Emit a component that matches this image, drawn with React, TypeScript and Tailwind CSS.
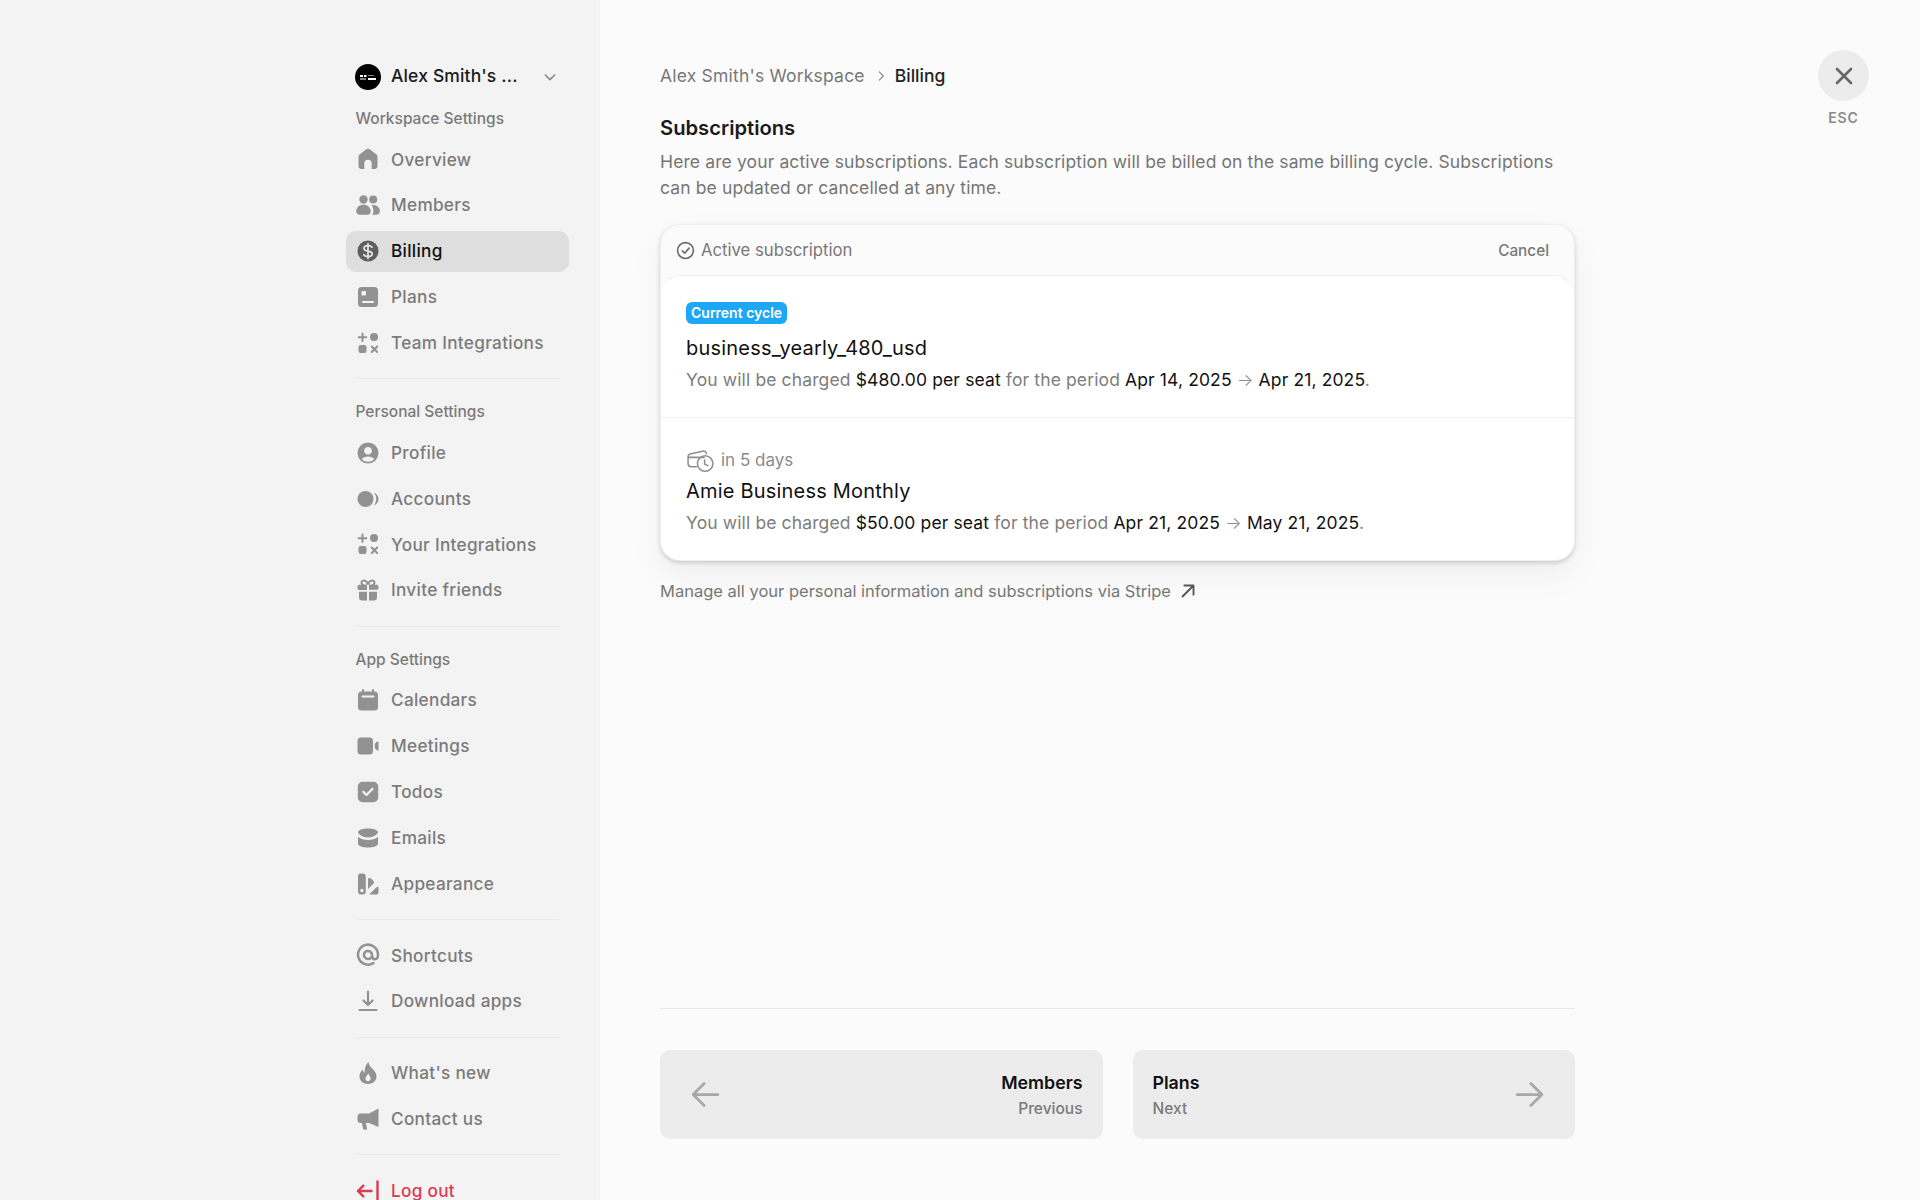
import React, { FC, ReactNode } from "react";

const Svg: FC<{ children: ReactNode }> = ({ children }) => (
  <svg viewBox="0 0 24 24" fill="currentColor" className="w-[24px] h-[24px]">
    {children}
  </svg>
);

const HomeIcon = () => (
  <Svg>
    <path d="M12 1.8c-.7 0-1.4.3-2 .7L3.9 7.2C3 7.9 2.5 9 2.5 10.1V19c0 1.7 1.3 3 3 3H8.3v-5.5a3.7 3.7 0 0 1 7.4 0V22h2.8c1.7 0 3-1.3 3-3v-8.9c0-1.1-.5-2.2-1.4-2.9L14 2.5c-.6-.4-1.3-.7-2-.7z" />
  </Svg>
);
const MembersIcon = () => (
  <Svg>
    <circle cx="7.5" cy="6.5" r="4.2" />
    <circle cx="17.2" cy="6.5" r="4" />
    <path d="M0.3 18.5c0-4 3-6.7 7.2-6.7s7.2 2.7 7.2 6.7c0 2-1.5 3.2-3 3.2h-8.4c-1.5 0-3-1.2-3-3.2z" />
    <path d="M15.5 12c4.7-.6 8.4 1.8 8.4 6.1 0 2-1.3 3.6-3 3.6h-4.8c.8-.9 1.3-2 1.3-3.3 0-2.5-.7-4.8-1.9-6.4z" />
  </Svg>
);
const BillingIcon = () => (
  <Svg>
    <circle cx="12" cy="12" r="10.5" />
    <path d="M16 8.2c-.7-1-2-1.6-4-1.6-2.4 0-4 1.1-4 2.8 0 3.9 8.2 1.5 8.2 5.3 0 1.7-1.7 2.8-4.2 2.8-2 0-3.5-.7-4.2-1.8M12 4.5v15" fill="none" stroke="#e4e4e4" strokeWidth="1.7" strokeLinecap="round" />
  </Svg>
);
const PlansIcon = () => (
  <Svg>
    <path fillRule="evenodd" d="M5.5 2h13A3.5 3.5 0 0 1 22 5.5v13a3.5 3.5 0 0 1-3.5 3.5h-13A3.5 3.5 0 0 1 2 18.5v-13A3.5 3.5 0 0 1 5.5 2zM6.5 6a1 1 0 0 0-1 1v2.5a1 1 0 0 0 1 1H9a1 1 0 0 0 1-1V7a1 1 0 0 0-1-1zM7 16a1 1 0 1 0 0 2h10a1 1 0 1 0 0-2z" />
  </Svg>
);
const IntegrationsIcon = () => (
  <Svg>
    <path d="M6.5 2.5v7.5M2.7 6.25h7.6M15.7 15.5l5.5 5.500M21.2 15.5l-5.500 5.500" fill="none" stroke="currentColor" strokeWidth="2" strokeLinecap="round" />
    <circle cx="18" cy="6" r="4" />
    <rect x="2.5" y="14" width="8" height="8" rx="2.2" />
  </Svg>
);
const ProfileIcon = () => (
  <Svg>
    <path fillRule="evenodd" d="M12 1.5a10.5 10.5 0 1 1 0 21 10.5 10.5 0 0 1 0-21zM12 6a3.8 3.8 0 1 0 0 7.6A3.8 3.8 0 0 0 12 6zM12 15.5c-2.7 0-5 1-6.2 2.7a8.4 8.4 0 0 0 12.4 0c-1.2-1.7-3.5-2.7-6.2-2.7z" />
  </Svg>
);
const AccountsIcon = () => (
  <Svg>
    <circle cx="9.5" cy="12" r="8" />
    <path d="M17.8 5.5c2.6 1 4.7 3.5 4.7 6.5s-2.1 5.5-4.7 6.5c1.5-1.8 2.4-4 2.4-6.5s-.9-4.7-2.4-6.5z" />
  </Svg>
);
const GiftIcon = () => (
  <Svg>
    <path fillRule="evenodd" d="M7.8 1.5c1.8 0 3.3 1 4.2 2.5.9-1.5 2.4-2.5 4.2-2.5 2 0 3.3 1.4 3.3 3 0 .9-.3 1.7-.8 2.3h2c1 0 1.8.8 1.8 1.8v1.7c0 .8-.7 1.4-1.5 1.4H13V6.8h-2v5.200H3c-.8 0-1.5-.6-1.5-1.4V8.600c0-1 .8-1.800 1.800-1.800h2c-.5-.6-.8-1.400-.8-2.300 0-1.600 1.300-3 3.300-3zM7.800 3.500c-.8 0-1.300.5-1.300 1.100 0 1.200 1.200 2.200 3.500 2.200h.5c0-1.700-1.100-3.300-2.700-3.300zM16.200 3.500c-1.600 0-2.700 1.600-2.700 3.300h.5c2.300 0 3.500-1 3.500-2.200 0-.6-.5-1.100-1.300-1.100z" />
    <path d="M3 13.800h8V22.500H6a3 3 0 0 1-3-3zM13 13.800h8v5.700a3 3 0 0 1-3 3h-5z" />
  </Svg>
);
const CalendarIcon = () => (
  <Svg>
    <path fillRule="evenodd" d="M7 1a1 1 0 0 1 1 1v1.500h8V2a1 1 0 1 1 2 0v1.500h.5A3.500 3.500 0 0 1 22 7v12a3.500 3.500 0 0 1-3.500 3.500h-13A3.500 3.500 0 0 1 2 19V7a3.500 3.500 0 0 1 3.500-3.500H6V2a1 1 0 0 1 1-1zM6.500 7.500a1 1 0 0 0 0 2h11a1 1 0 1 0 0-2z" />
  </Svg>
);
const MeetingsIcon = () => (
  <Svg>
    <rect x="1.5" y="3.5" width="15.5" height="17" rx="3.5" />
    <path d="M18.8 9.800l2.400-2.200c.5-.5 1.300-.1 1.300.7v7.400c0 .8-.8 1.200-1.300.7l-2.400-2.200z" />
  </Svg>
);
const TodosIcon = () => (
  <Svg>
    <path fillRule="evenodd" d="M6.500 1.800h11a4.700 4.700 0 0 1 4.700 4.700v11a4.700 4.700 0 0 1-4.700 4.700h-11a4.700 4.700 0 0 1-4.700-4.700v-11a4.700 4.700 0 0 1 4.700-4.700zM17.400 9.500a1.100 1.100 0 0 0-1.600-1.500l-5.300 5.400-2.300-2.300a1.100 1.100 0 0 0-1.600 1.600l3.100 3.100c.4.400 1.100.4 1.600 0z" />
  </Svg>
);
const EmailsIcon = () => (
  <Svg>
    <path d="M12 2.500c5.500 0 10 1.600 10 3.800 0 1.900-4.500 5.200-10 5.200S2 8.200 2 6.300c0-2.200 4.500-3.800 10-3.800z" />
    <path d="M2 10.700c2.300 2.100 6 3.300 10 3.300s7.700-1.200 10-3.300v7c0 2.100-4.500 3.800-10 3.800S2 19.800 2 17.700z" />
  </Svg>
);
const AppearanceIcon = () => (
  <Svg>
    <path fillRule="evenodd" d="M4.500 1.500h2.300c1.700 0 3 1.300 3 3v15c0 1.700-1.300 3-3 3H5c-1.700 0-3-1.300-3-3V4c0-1.400 1.100-2.500 2.500-2.500zM5.900 16.800a1.700 1.700 0 1 0 0 3.400 1.700 1.700 0 0 0 0-3.400z" />
    <path d="M12 6.500c1-.8 2.500-.7 3.300.3l2.500 2.800c.4.500.4 1.100 0 1.600L12 17zM22.500 15.200v5.300c0 1.100-.9 2-2 2h-7.300l7-7.100c.7-.7 2.300-.8 2.300-.2z" />
  </Svg>
);
const ShortcutsIcon = () => (
  <Svg>
    <path d="M17.500 20A10 10 0 1 1 22 12c0 2.500-1.300 4.200-3.200 4.200S16 14.500 16 12.500V12a4 4 0 1 0-1.200 2.800" fill="none" stroke="currentColor" strokeWidth="2.5" strokeLinecap="round" />
  </Svg>
);
const DownloadIcon = () => (
  <Svg>
    <path d="M12 2.500v13M7.500 11.500l4.500 4.500 4.500-4.500M3.500 21h17" fill="none" stroke="currentColor" strokeWidth="2.2" strokeLinecap="round" strokeLinejoin="round" />
  </Svg>
);
const FlameIcon = () => (
  <Svg>
    <path fillRule="evenodd" d="M12.500 1c.5 3.200 2 4.800 3.700 6.600C18.300 9.800 20.500 12 20.500 15.500c0 4.400-3.800 7.500-8.500 7.500S3.500 19.900 3.500 15.500c0-3 1.400-5.300 3.300-7 .2 1.600.7 2.700 1.800 3.500C8.500 7.500 9.700 3.400 12.500 1zM12.300 12.200c-.4 1.800-2.800 2.800-2.800 5.300 0 1.700 1.100 2.800 2.500 2.800s2.600-1.100 2.600-2.800c0-2.300-1.700-3.300-2.300-5.300z" />
  </Svg>
);
const MegaphoneIcon = () => (
  <Svg>
    <path d="M22.500 1.500v18.500L13 16H9.800l1.200 5c.2.900-.4 1.700-1.300 1.700H8.500c-.7 0-1.200-.4-1.400-1L5.800 16H4.500c-1.700 0-3-1.300-3-3V9.500c0-1.700 1.300-3 3-3H13z" />
  </Svg>
);
const LogoutIcon = () => (
  <Svg>
    <path d="M15.500 12H2M7.300 6.700L2 12l5.300 5.300M21.500 2.500v19" fill="none" stroke="currentColor" strokeWidth="2.4" strokeLinecap="round" strokeLinejoin="round" />
  </Svg>
);

const NavItem: FC<{ icon: ReactNode; label: string; active?: boolean }> = ({ icon, label, active }) => (
  <div
    className={`h-[40.86px] flex items-center gap-[11px] pl-[10px] rounded-[10px] text-[17.2px] tracking-[0.3px] font-medium ${
      active ? "bg-[#dedede] text-[#111111]" : "text-[#7b7b7b]"
    }`}
  >
    <span className={`flex items-center justify-center w-[24px] h-[24px] ${active ? "text-[#5f5f5f]" : "text-[#929292]"}`}>{icon}</span>
    {label}
  </div>
);

const Label: FC<{ children: ReactNode }> = ({ children }) => (
  <div className="h-[20px] leading-[20px] pl-[9.5px] mb-[10px] text-[15.5px] font-medium text-[#7a7a7a]">{children}</div>
);

const Divider = () => <div className="h-px w-[203px] ml-[10px] mt-[15px] mb-[15px] bg-[#e9e9e9]" />;

const Group: FC<{ children: ReactNode }> = ({ children }) => <div className="flex flex-col gap-[5px]">{children}</div>;

const Sidebar = () => (
  <aside className="w-[600px] h-[1200px] shrink-0 overflow-hidden bg-[#f3f3f3] border-r border-[#f0f0f0] pl-[346px] pr-[30px] pt-[56px]">
    <div className="h-[41px] flex items-center pl-[9px] pr-[11px]">
      <svg viewBox="0 0 26 26" className="w-[26px] h-[26px] shrink-0">
        <circle cx="13" cy="13" r="13" fill="#000000" />
        <rect x="5" y="11" width="3" height="2" fill="#ffffff" />
        <rect x="9" y="11" width="2.5" height="2" fill="#ffffff" />
        <rect x="5" y="14.5" width="6" height="1" fill="#ffffff" />
        <rect x="13" y="14" width="8" height="2" fill="#ffffff" />
        <rect x="13" y="11" width="6" height="1" fill="#888888" />
      </svg>
      <span className="ml-[10px] text-[17.5px] tracking-[0.15px] font-medium text-[#1a1a1a]">Alex Smith's ...</span>
      <svg viewBox="0 0 24 24" fill="none" stroke="#8a8a8a" strokeWidth="2.4" strokeLinecap="round" strokeLinejoin="round" className="ml-auto w-[16px] h-[16px]">
        <path d="M5 9l7 7 7-7" />
      </svg>
    </div>
    <div className="mt-[12px]">
      <Label>Workspace Settings</Label>
      <Group>
        <NavItem icon={<HomeIcon />} label="Overview" />
        <NavItem icon={<MembersIcon />} label="Members" />
        <NavItem icon={<BillingIcon />} label="Billing" active />
        <NavItem icon={<PlansIcon />} label="Plans" />
        <NavItem icon={<IntegrationsIcon />} label="Team Integrations" />
      </Group>
    </div>
    <Divider />
    <div className="mt-[23px]">
      <Label>Personal Settings</Label>
      <Group>
        <NavItem icon={<ProfileIcon />} label="Profile" />
        <NavItem icon={<AccountsIcon />} label="Accounts" />
        <NavItem icon={<IntegrationsIcon />} label="Your Integrations" />
        <NavItem icon={<GiftIcon />} label="Invite friends" />
      </Group>
    </div>
    <Divider />
    <div className="mt-[23px]">
      <Label>App Settings</Label>
      <Group>
        <NavItem icon={<CalendarIcon />} label="Calendars" />
        <NavItem icon={<MeetingsIcon />} label="Meetings" />
        <NavItem icon={<TodosIcon />} label="Todos" />
        <NavItem icon={<EmailsIcon />} label="Emails" />
        <NavItem icon={<AppearanceIcon />} label="Appearance" />
      </Group>
    </div>
    <Divider />
    <Group>
      <NavItem icon={<ShortcutsIcon />} label="Shortcuts" />
      <NavItem icon={<DownloadIcon />} label="Download apps" />
    </Group>
    <Divider />
    <Group>
      <NavItem icon={<FlameIcon />} label="What's new" />
      <NavItem icon={<MegaphoneIcon />} label="Contact us" />
    </Group>
    <Divider />
    <div className="h-[41px] flex items-center gap-[11px] pl-[10px] text-[17.2px] tracking-[0.3px] font-medium text-[#dc3a50]">
      <span className="w-[24px] h-[24px]">
        <LogoutIcon />
      </span>
      Log out
    </div>
  </aside>
);

const SubRow: FC<{ head: ReactNode; headClass: string; title: string; price: string; from: string; to: string; border?: boolean }> = ({
  head,
  headClass,
  title,
  price,
  from,
  to,
  border,
}) => (
  <div className={`h-[142px] pl-[25px] flex flex-col ${border ? "border-b border-[#eeeeee]" : ""}`}>
    <div className={`h-[22px] flex items-center ${headClass}`}>{head}</div>
    <div className="h-[28px] leading-[28px] text-[20px] tracking-[0.2px] text-[#111111]">{title}</div>
    <div className="mt-[6px] h-[24px] leading-[24px] text-[17.5px] tracking-[0.125px] text-[#7d7d7d]">
      You will be charged <span className="text-[#111111]">{price} per seat</span> for the period{" "}
      <span className="text-[#111111]">{from}</span> <span className="font-light text-[#8f8f8f]">→</span> <span className="text-[#111111]">{to}</span>.
    </div>
  </div>
);

const PagerCard: FC<{ title: string; sub: string; next?: boolean }> = ({ title, sub, next }) => (
  <div className={`flex-1 h-[89px] rounded-[10px] bg-[#ececec] flex items-center justify-between ${next ? "pl-[20px] pr-[29px]" : "flex-row-reverse pl-[29px] pr-[20px]"}`}>
    <div className={`pt-[2px] flex flex-col ${next ? "items-start" : "items-end"}`}>
      <span className="text-[17.8px] leading-[26px] font-semibold text-[#111111]">{title}</span>
      <span className="mt-[1px] text-[15.5px] leading-[24px] font-medium text-[#7a7a7a]">{sub}</span>
    </div>
    <svg viewBox="0 0 24 24" fill="none" stroke="#a8a8a8" strokeWidth="2" strokeLinecap="round" strokeLinejoin="round" className={`w-[33px] h-[33px] ${next ? "" : "rotate-180"}`}>
      <path d="M3 12h18M13 4l8 8-8 8" />
    </svg>
  </div>
);

export default function App() {
  return (
    <div className="relative flex h-[1200px] w-[1920px] overflow-hidden bg-[#fbfbfb] [font-family:Inter,sans-serif]">
      <Sidebar />
      <main className="flex flex-col w-[915px] ml-[60px] pt-[64px] pb-[61px]">
        <div className="h-[24px] flex items-center text-[17.5px] tracking-[0.2px] text-[#777777]">
          Alex Smith's Workspace
          <svg viewBox="0 0 24 24" fill="none" stroke="#8a8a8a" strokeWidth="2" strokeLinecap="round" strokeLinejoin="round" className="ml-[9px] mr-[7px] w-[14px] h-[14px]">
            <path d="M9 5l7 7-7 7" />
          </svg>
          <span className="font-medium tracking-normal text-[#222222]">Billing</span>
        </div>
        <h1 className="mt-[26px] h-[28px] leading-[28px] text-[20.2px] font-semibold text-[#1a1a1a]">Subscriptions</h1>
        <p className="mt-[7px] text-[17.5px] tracking-[0.12px] leading-[25.5px] text-[#757575]">
          Here are your active subscriptions. Each subscription will be billed on the same billing cycle. Subscriptions can be updated or cancelled at any time.
        </p>

        <div className="mt-[24px] rounded-[20px] border border-[#efefef] bg-[#fbfbfb] shadow-[0_2px_4px_rgba(0,0,0,0.16),0_14px_34px_rgba(0,0,0,0.05)]">
          <div className="h-[50px] pt-[2px] flex items-center justify-between pl-[15px] pr-[25px]">
            <div className="flex items-center gap-[6px] text-[16.7px] text-[#777777]">
              <svg viewBox="0 0 24 24" fill="none" stroke="#6a6a6a" strokeWidth="2" strokeLinecap="round" strokeLinejoin="round" className="w-[19px] h-[19px]">
                <circle cx="12" cy="12" r="10" />
                <path d="M8 12.5l3 3 5.5-6.5" />
              </svg>
              Active subscription
            </div>
            <span className="text-[15.3px] font-medium text-[#777777]">Cancel</span>
          </div>
          <div className="bg-white rounded-[20px] border-t border-[#eeeeee]">
            <SubRow
              border
              headClass="mt-[26px] mb-[10px]"
              head={<span className="h-[22px] px-[5px] rounded-[6px] bg-[#1ea7f5] text-white text-[14px] leading-[22px] font-semibold">Current cycle</span>}
              title="business_yearly_480_usd"
              price="$480.00"
              from="Apr 14, 2025"
              to="Apr 21, 2025"
            />
            <SubRow
              headClass="mt-[32px] mb-[5px]"
              head={
                <span className="flex items-center gap-[6px] text-[17px] text-[#8a8a8a]">
                  <svg viewBox="0 0 28 24" fill="none" stroke="#8f8f8f" strokeWidth="1.5" strokeLinecap="round" strokeLinejoin="round" className="w-[29px] h-[25px]">
                    <path d="M10 17H5a3 3 0 0 1-3-3V7.5a3 3 0 0 1 3-3M2.5 8h15M5 4.5l11-2.5c2-.4 3.5.6 3.8 2.5" />
                    <circle cx="18.5" cy="14" r="7.5" />
                    <path d="M18 10.5v4l3 1.5" />
                  </svg>
                  in 5 days
                </span>
              }
              title="Amie Business Monthly"
              price="$50.00"
              from="Apr 21, 2025"
              to="May 21, 2025"
            />
          </div>
        </div>

        <div className="mt-[18px] h-[24px] flex items-center gap-[6px] text-[16.5px] text-[#777777]">
          Manage all your personal information and subscriptions via Stripe
          <svg viewBox="0 0 24 24" fill="none" stroke="#555555" strokeWidth="2" strokeLinecap="round" strokeLinejoin="round" className="w-[22px] h-[22px]">
            <path d="M6 18L18 6M8 6h10v10" />
          </svg>
        </div>

        <div className="mt-auto border-t border-[#e9e9e9] pt-[41px] flex gap-[30px]">
          <PagerCard title="Members" sub="Previous" />
          <PagerCard title="Plans" sub="Next" next />
        </div>
      </main>

      <div className="absolute left-[1818px] top-[50px] flex flex-col items-center w-[51px]">
        <div className="w-[51px] h-[51px] rounded-full bg-[#ececec] flex items-center justify-center">
          <svg viewBox="0 0 24 24" fill="none" stroke="#666666" strokeWidth="2.6" strokeLinecap="round" className="w-[24px] h-[24px]">
            <path d="M5 5l14 14M19 5L5 19" />
          </svg>
        </div>
        <span className="mt-[7px] text-[14px] leading-[20px] font-semibold tracking-[0.06em] text-[#8a8a8a]">ESC</span>
      </div>
    </div>
  );
}
